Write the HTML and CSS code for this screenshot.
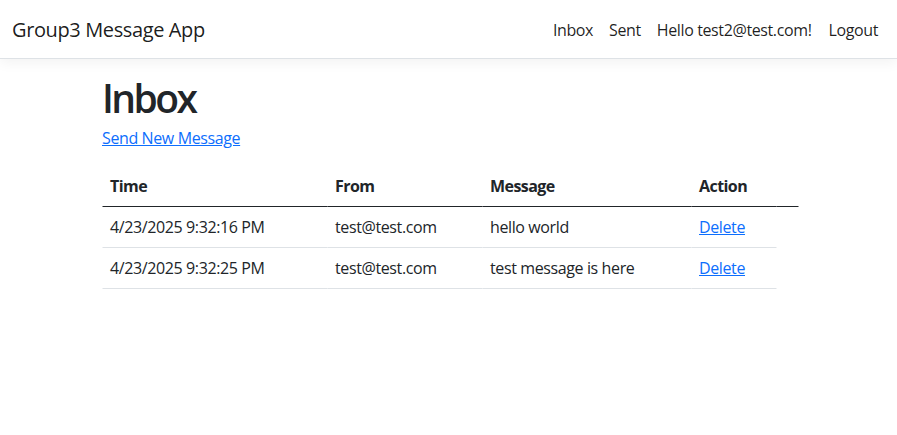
FILE: index.html
```html
<!DOCTYPE html>
<html lang="en">
<head>
<meta charset="utf-8">
<title>Inbox - Group3 Message App</title>
<link rel="stylesheet" href="styles.css">
</head>
<body>
<header class="navbar">
  <a class="brand" href="#">Group3 Message App</a>
  <nav class="nav">
    <a class="nav-link" href="#">Inbox</a>
    <a class="nav-link" href="#">Sent</a>
    <span class="nav-link">Hello test2@test.com!</span>
    <a class="nav-link logout" href="#">Logout</a>
  </nav>
</header>
<main class="container">
  <h1 class="title">Inbox</h1>
  <p class="new-link"><a href="#">Send New Message</a></p>
  <table class="table">
    <thead>
      <tr>
        <th class="c-time">Time</th>
        <th class="c-from">From</th>
        <th class="c-msg">Message</th>
        <th class="c-act">Action</th>
        <th class="c-extra"></th>
      </tr>
    </thead>
    <tbody>
      <tr>
        <td>4/23/2025 9:32:16 PM</td>
        <td>test@test.com</td>
        <td>hello world</td>
        <td><a href="#">Delete</a></td>
      </tr>
      <tr>
        <td>4/23/2025 9:32:25 PM</td>
        <td>test@test.com</td>
        <td>test message is here</td>
        <td><a href="#">Delete</a></td>
      </tr>
    </tbody>
  </table>
</main>
</body>
</html>
```
FILE: styles.css
```css
* { box-sizing: border-box; }
html, body { margin: 0; padding: 0; }
body {
  font-family: "Open Sans", "Noto Sans", sans-serif;
  font-size: 16px;
  line-height: 1.5;
  letter-spacing: -0.024em;
  color: #212529;
  background: #fff;
}
a { color: #0d6efd; }

.navbar {
  display: flex;
  align-items: center;
  justify-content: space-between;
  height: 59px;
  padding: 0 11px 0 12px;
  border-bottom: 1px solid #dee2e6;
  box-shadow: 0 4px 12px rgba(0,0,0,0.05);
}
.brand {
  font-size: 20px;
  color: rgba(0,0,0,0.9);
  text-decoration: none;
  padding-top: 1px;
}
.nav { display: flex; padding-top: 1px; }
.nav-link {
  padding: 8px;
  color: rgba(0,0,0,0.88);
  text-decoration: none;
}
.logout { margin-left: 1px; }

.container {
  width: 720px;
  margin: 0 auto;
  padding: 15px 12px 0;
  transform: translateX(1.5px);
}
.title {
  margin: 0 0 4px;
  font-size: 39px;
  font-weight: 600;
  line-height: 1.23;
  letter-spacing: -0.065em;
}
.new-link { margin: 0 0 16px; }

.table {
  width: 100%;
  border-collapse: collapse;
}
.table th, .table td {
  padding: 8px;
  text-align: left;
  vertical-align: top;
}
.table th {
  font-weight: 700;
  letter-spacing: -0.035em;
  border-bottom: 1px solid #212529;
}
.table td { border-bottom: 1px solid #dee2e6; }
.c-time { width: 225px; }
.c-from { width: 155px; }
.c-msg { width: 209px; }
.c-act { width: 85px; }
.c-extra { width: 22px; }
```
